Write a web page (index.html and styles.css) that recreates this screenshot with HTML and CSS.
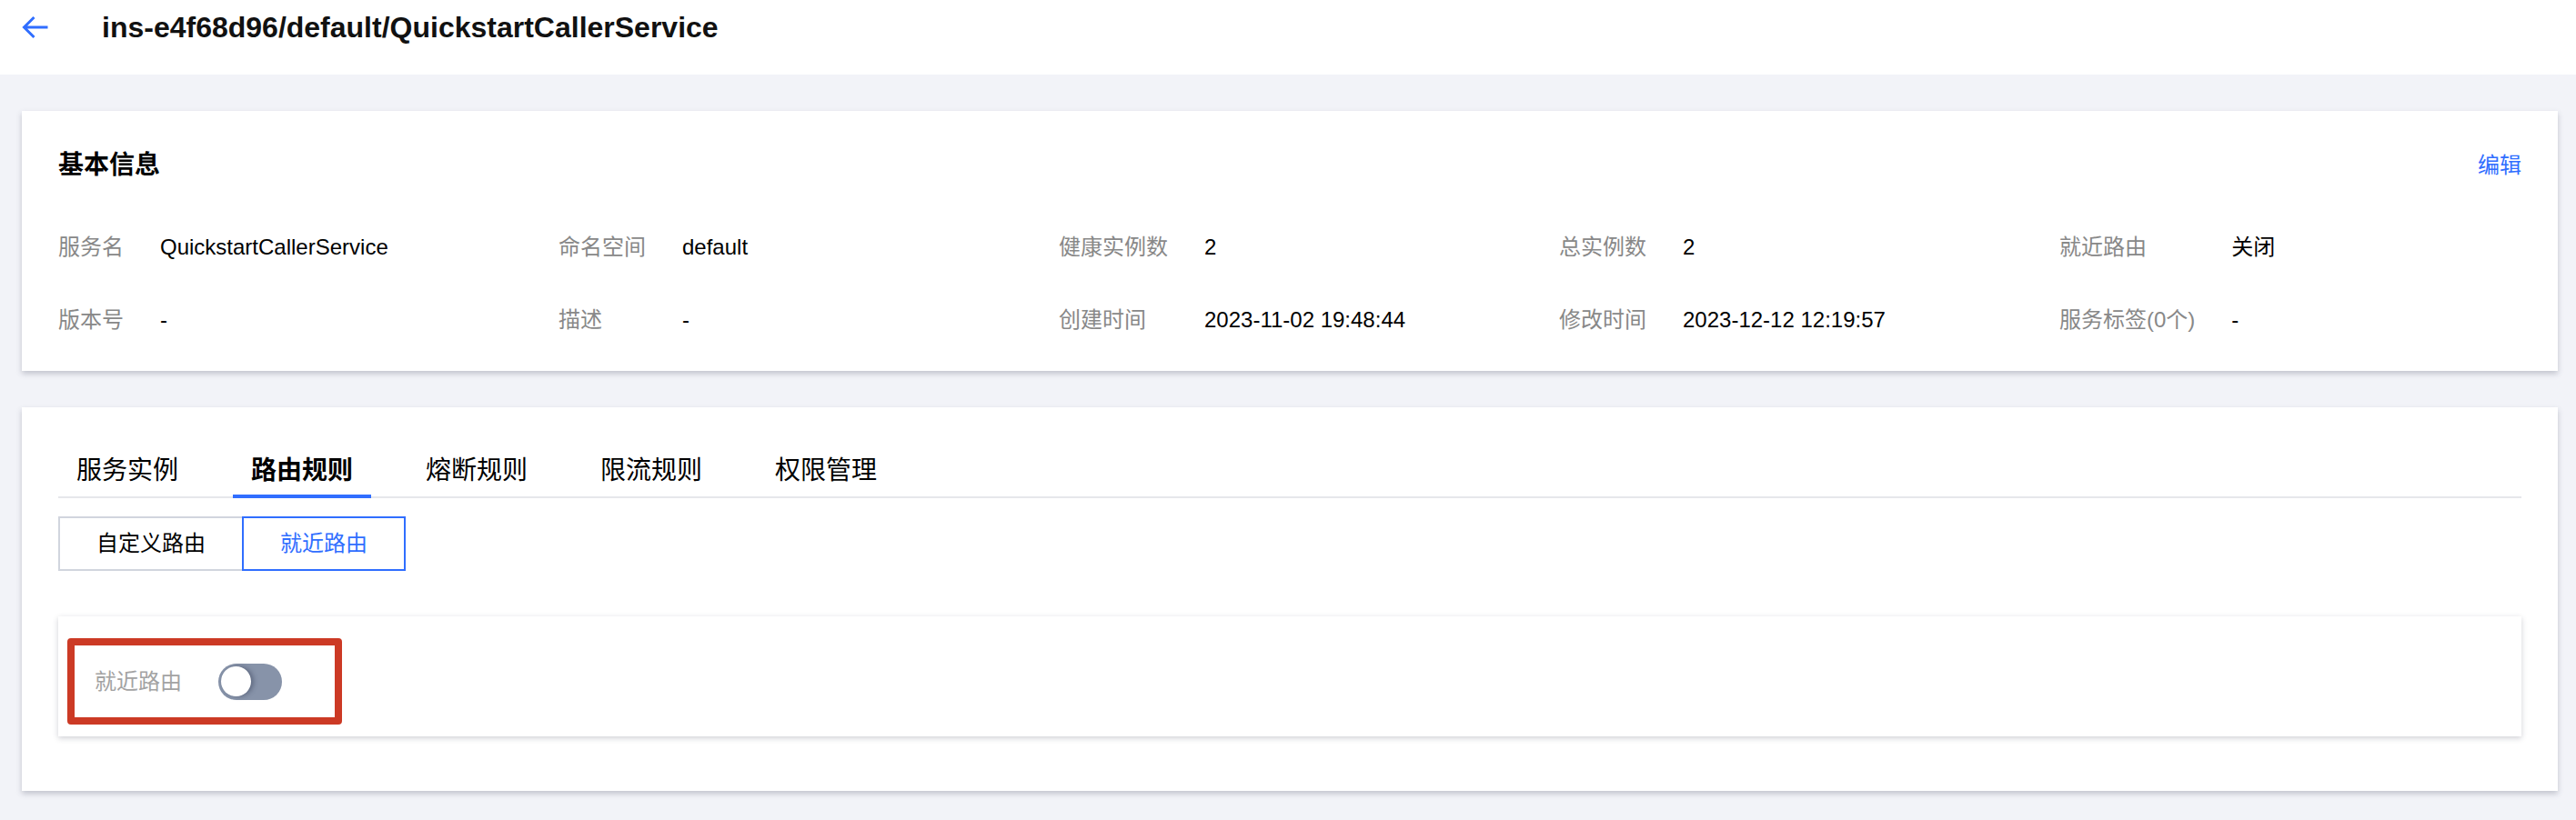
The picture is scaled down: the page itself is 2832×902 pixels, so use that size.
FILE: index.html
```html
<!DOCTYPE html>
<html lang="zh-CN">
<head>
<meta charset="utf-8">
<title>QuickstartCallerService</title>
<link rel="stylesheet" href="styles.css">
</head>
<body>
<header class="topbar">
  <svg class="back" viewBox="0 0 30 28" width="30" height="28" aria-hidden="true"><path d="M28.5 14H2.5M13.5 3L2.5 14L13.5 25" fill="none" stroke="#306eff" stroke-width="3"/></svg>
  <h1 class="page-title">ins-e4f68d96/default/QuickstartCallerService</h1>
</header>
<main class="content">
  <section class="card info-card">
    <div class="card-head">
      <h2 class="card-title">基本信息</h2>
      <a class="link">编辑</a>
    </div>
    <div class="info-grid">
      <dl class="info-col"><dt>服务名</dt><dd>QuickstartCallerService</dd><dt>版本号</dt><dd>-</dd></dl>
      <dl class="info-col"><dt>命名空间</dt><dd>default</dd><dt>描述</dt><dd>-</dd></dl>
      <dl class="info-col"><dt>健康实例数</dt><dd>2</dd><dt>创建时间</dt><dd>2023-11-02 19:48:44</dd></dl>
      <dl class="info-col"><dt>总实例数</dt><dd>2</dd><dt>修改时间</dt><dd>2023-12-12 12:19:57</dd></dl>
      <dl class="info-col"><dt>就近路由</dt><dd>关闭</dd><dt>服务标签(0个)</dt><dd>-</dd></dl>
    </div>
  </section>
  <section class="card tabs-card">
    <nav class="tabs">
      <span class="tab">服务实例</span>
      <span class="tab active">路由规则</span>
      <span class="tab">熔断规则</span>
      <span class="tab">限流规则</span>
      <span class="tab">权限管理</span>
    </nav>
    <div class="seg">
      <span class="seg-btn">自定义路由</span>
      <span class="seg-btn selected">就近路由</span>
    </div>
    <div class="panel">
      <div class="highlight">
        <span class="field-label">就近路由</span>
        <span class="switch"><span class="knob"></span></span>
      </div>
    </div>
  </section>
</main>
</body>
</html>
```

FILE: styles.css
```css
* {
  box-sizing: border-box;
}

html, body {
  margin: 0;
  padding: 0;
}

body {
  background: #f2f3f8;
  font-family: "Liberation Sans", "Noto Sans CJK SC", sans-serif;
  color: #000;
  min-height: 902px;
}

.topbar {
  height: 82px;
  background: #fff;
  display: flex;
  align-items: center;
  padding: 0 0 22px 24px;
}

.back {
  display: block;
  flex: none;
}

.page-title {
  margin: 0 0 0 58px;
  font-size: 32px;
  line-height: 40px;
  font-weight: 700;
  color: #111;
}

.content {
  padding: 40px 20px 32px 24px;
}

.card {
  background: #fff;
  box-shadow: 0 3px 6px rgba(54, 58, 80, 0.26);
}

.info-card {
  padding: 40px 40px 38px;
}

.card-head {
  display: flex;
  justify-content: space-between;
  align-items: center;
  height: 40px;
}

.card-title {
  margin: 0;
  font-size: 28px;
  line-height: 40px;
  font-weight: 700;
}

.link {
  font-size: 24px;
  line-height: 40px;
  color: #306eff;
  cursor: pointer;
}

.info-grid {
  display: grid;
  grid-template-columns: repeat(4, 550px) 1fr;
  margin-top: 52px;
}

.info-col {
  margin: 0;
  display: grid;
  grid-template-columns: auto 1fr;
  column-gap: 40px;
  row-gap: 44px;
  font-size: 24px;
  line-height: 36px;
}

.info-col dt {
  color: #888;
  white-space: nowrap;
}

.info-col dd {
  margin: 0;
  color: #000;
  white-space: nowrap;
}

.tabs-card {
  margin-top: 40px;
  padding: 40px 40px 60px;
}

.tabs {
  display: flex;
  gap: 40px;
  border-bottom: 2px solid #e6e7eb;
}

.tab {
  padding: 10px 20px 6px;
  font-size: 28px;
  line-height: 40px;
  color: #000;
  border-bottom: 4px solid transparent;
  margin-bottom: -2px;
}

.tab.active {
  font-weight: 700;
  border-bottom-color: #306eff;
}

.seg {
  display: flex;
  margin-top: 20px;
}

.seg-btn {
  height: 60px;
  padding: 0 40px;
  border: 2px solid #d1d5de;
  font-size: 24px;
  line-height: 56px;
  color: #000;
}

.seg-btn.selected {
  border-color: #306eff;
  color: #306eff;
  margin-left: -2px;
}

.panel {
  margin-top: 50px;
  height: 132px;
  padding: 24px 0 0 10px;
  background: #fff;
  box-shadow: 0 2px 6px rgba(54, 58, 80, 0.24);
}

.highlight {
  width: 302px;
  height: 95px;
  border: 8px solid #cc3a25;
  border-radius: 4px;
  display: flex;
  align-items: center;
  padding-left: 22px;
  gap: 40px;
}

.field-label {
  font-size: 24px;
  line-height: 36px;
  color: #a3a3a3;
}

.switch {
  width: 70px;
  height: 40px;
  border-radius: 20px;
  background: #8793a9;
  display: flex;
  align-items: center;
  padding: 0 3px;
}

.knob {
  width: 33px;
  height: 33px;
  border-radius: 50%;
  background: #fff;
  box-shadow: 3px 0 5px rgba(50, 60, 85, 0.45);
}
```
